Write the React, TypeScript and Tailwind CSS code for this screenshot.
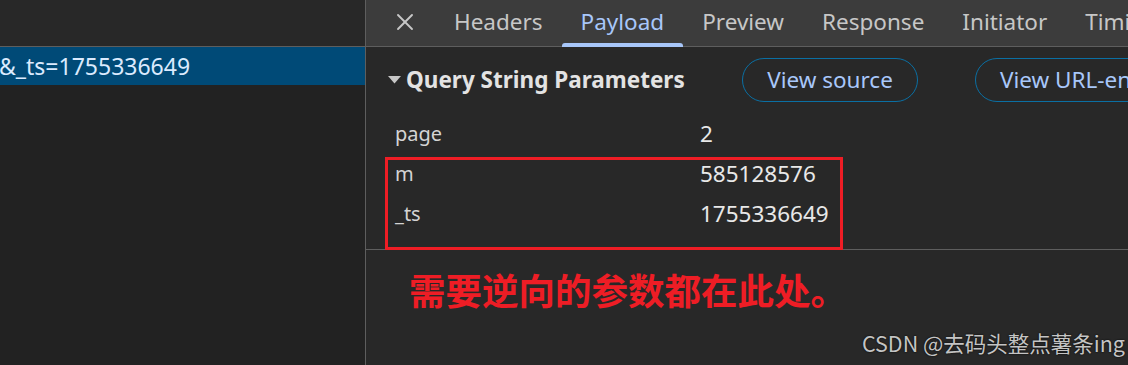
import { X } from "lucide-react";

const tabs = ["Headers", "Payload", "Preview", "Response", "Initiator", "Timing"];

const params = [
  { name: "page", value: "2" },
  { name: "m", value: "585128576" },
  { name: "_ts", value: "1755336649" },
];

const font = { fontFamily: '"Noto Sans", "Noto Sans CJK SC", sans-serif' };

const App = () => {
  return (
    <div
      className="relative flex w-[1128px] h-[365px] overflow-hidden bg-[#282828] text-[#e3e3e3]"
      style={font}
    >
      {/* request list */}
      <div className="w-[366px] shrink-0 flex flex-col bg-[#222222] border-r border-[#5e5e5e]">
        <div className="h-[47px] bg-[#282828] border-b border-[#5e5e5e]" />
        <div className="h-[38px] bg-[#004a77] flex items-center text-[23px] text-[#dbeafe] whitespace-nowrap -ml-[1px]">
          &amp;_ts=1755336649
        </div>
      </div>

      {/* details */}
      <div className="flex-1 flex flex-col min-w-0">
        <div className="h-[47px] bg-[#3c3c3c] border-b border-[#5e5e5e] flex items-stretch whitespace-nowrap">
          <div className="pl-[25px] pr-[16px] pb-[3px] flex items-center text-[#c7c7c7]">
            <X size={28} strokeWidth={1.6} />
          </div>
          {tabs.map((t) => (
            <div
              key={t}
              className={
                t === "Payload"
                  ? "relative shrink-0 px-[19px] pb-[3px] flex items-center text-[22.5px] text-[#a8c7fa]"
                  : "relative shrink-0 px-[19px] pb-[3px] flex items-center text-[22.5px] text-[#c7c7c7]"
              }
            >
              {t}
              {t === "Payload" && (
                <span className="absolute left-0 right-0 bottom-[-1px] h-[4px] rounded-t-[3px] bg-[#a8c7fa]" />
              )}
            </div>
          ))}
        </div>

        <div className="pt-[11px] flex items-center pl-[22px] whitespace-nowrap">
          <div className="w-[354px] shrink-0 flex items-center gap-[5px] font-bold text-[22.5px] text-[#e3e3e3]">
            <svg width="13" height="8" viewBox="0 0 13 8">
              <path d="M0 0h13L6.5 7.5z" fill="#c7c7c7" />
            </svg>
            Query String Parameters
          </div>
          <button className="shrink-0 h-[44px] w-[176px] rounded-full border border-[#0a6fa3] text-[22.5px] text-[#a8c7fa]">
            View source
          </button>
          <button className="shrink-0 ml-[57px] h-[44px] px-[24px] rounded-full border border-[#0a6fa3] text-[22.5px] text-[#a8c7fa]">
            View URL-encoded
          </button>
        </div>

        <div className="pt-[12px] pb-[15px] border-b border-[#5e5e5e]">
          {params.map((p) => (
            <div key={p.name} className="h-[40px] flex items-center text-[20px]">
              <div className="w-[334px] pl-[29px] text-[#d4d4d4]">{p.name}</div>
              <div className="text-[22.5px] text-[#e8e8e8]">{p.value}</div>
            </div>
          ))}
        </div>

        <div
          className="pt-[18px] pl-[43px] text-[36.5px] font-bold text-[#ee1d25] leading-[44px] whitespace-nowrap"
          style={{ fontFamily: '"Noto Sans CJK SC", sans-serif' }}
        >
          需要逆向的参数都在此处。
        </div>
      </div>

      {/* annotation box */}
      <div className="absolute left-[385px] top-[157px] w-[458px] h-[93px] border-[3px] border-[#ee1d25]" />

      {/* watermark */}
      <div
        className="absolute right-[3px] bottom-[6px] text-[21.5px] text-[#c4c4c4] whitespace-nowrap"
        style={{ fontFamily: '"Noto Sans CJK SC", sans-serif', textShadow: "0 0 2px #000" }}
      >
        CSDN @去码头整点薯条ing
      </div>
    </div>
  );
};

export default App;
